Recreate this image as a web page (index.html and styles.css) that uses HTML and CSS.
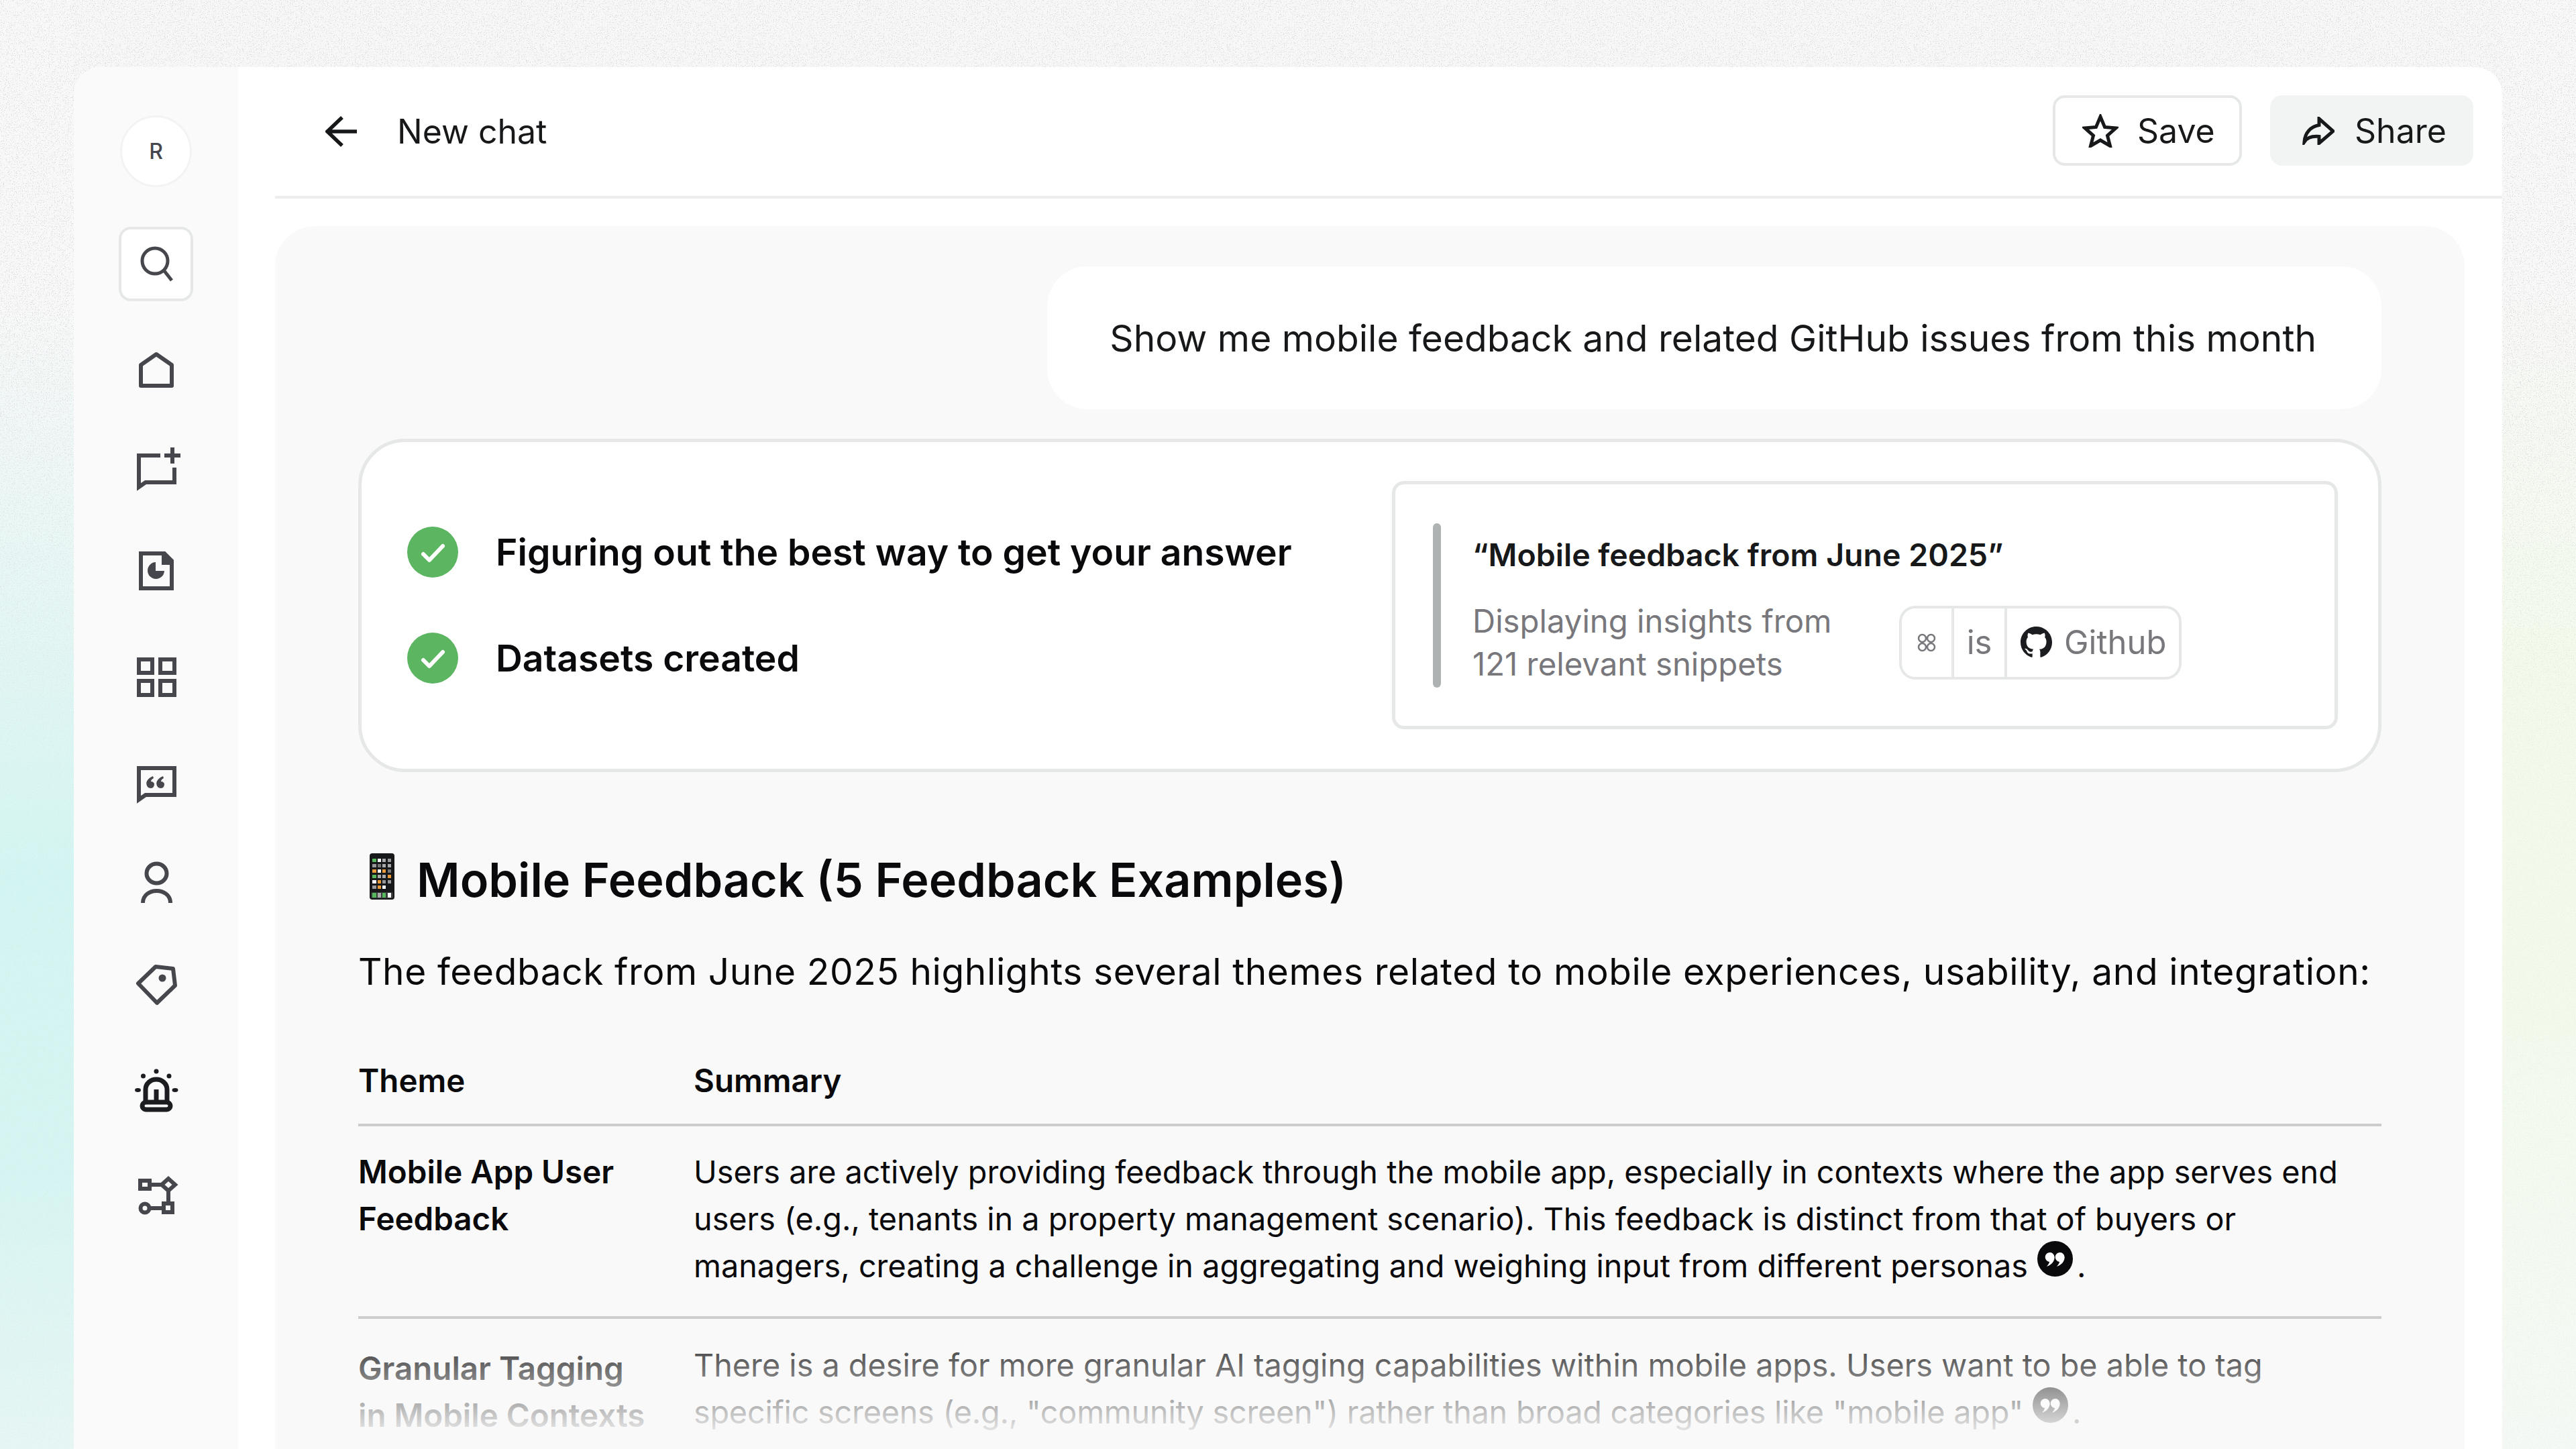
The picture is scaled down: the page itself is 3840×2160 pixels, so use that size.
FILE: index.html
```html
<!DOCTYPE html>
<html>
<head>
<title>New chat</title>
<link rel="stylesheet" href="styles.css">
</head>
<body>
    <svg class="grain" aria-hidden="true">
        <filter id="specks">
            <feTurbulence type="fractalNoise" baseFrequency="0.75" numOctaves="2" seed="7"/>
            <feColorMatrix type="matrix" values="0 0 0 0 0.72  0 0 0 0 0.72  0 0 0 0 0.72  0 0 0 -9 3.6"/>
        </filter>
        <rect width="100%" height="100%" filter="url(#specks)"/>
    </svg>

    <div class="window">
        <nav class="rail">
            <div class="avatar">R</div>
            <div class="search-btn">
                <svg viewBox="190 354 84 84"><circle cx="230" cy="391" r="19"/><path d="M244 406l11 14"/></svg>
            </div>
            <div class="rail-icons">
                <!-- each box is 84 square, viewBox is offset so the numbers read as page coordinates -->
                <svg viewBox="190 509 84 84"><path d="M209 575v-31l23-16 23 16v31z" stroke-linejoin="round"/></svg>
                <svg viewBox="190 663 84 84">
                    <path d="M238 679h-32v47l10-7h43v-22"/><path d="M256 667v24M244 679h24"/>
                </svg>
                <svg viewBox="190 817 84 84">
                    <path d="M244 825h-35v52h46v-41z"/><path class="solid" d="M240 825h5l13 12v5h-18z"/>
                    <path class="solid" d="M231 838v13h13a12.500 12.500 0 1 1-13-13z"/>
                </svg>
                <svg viewBox="190 971 84 84">
                    <path d="M206 983h20v20h-20zM238 983h21v20h-21zM206 1015h20v21h-20zM238 1015h21v21h-21z"/>
                </svg>
                <svg viewBox="190 1125 84 84">
                    <path d="M206 1145h53v40h-43l-10 7z"/>
                    <path class="solid" d="M219 1173c-4-6-1-12 8-16l1 3c-3 2-4 3-4 5 3 0 5 2 5 4 0 3-2 6-5 6-2 0-4-1-5-2zM234 1173c-4-6-1-12 8-16l1 3c-3 2-4 3-4 5 3 0 5 2 5 4 0 3-2 6-5 6-2 0-4-1-5-2z"/>
                </svg>
                <svg viewBox="190 1279 84 84">
                    <ellipse cx="232.500" cy="1302" rx="15" ry="14.500"/><path d="M212 1346c0-24 41-24 41 0"/>
                </svg>
                <svg viewBox="190 1433 84 84">
                    <path d="M205 1466l26-25 26 3 3 25-27 26z" stroke-linejoin="round"/><circle class="solid" cx="241" cy="1458" r="5.500"/>
                </svg>
                <svg class="dark" viewBox="190 1587 84 84">
                    <path d="M216 1641v-17a16 15 0 0 1 32 0v17"/><path d="M232 1624v16"/>
                    <rect x="211" y="1643" width="42" height="11" rx="5.500"/>
                    <g class="solid">
                        <circle cx="232" cy="1597" r="3.500"/><circle cx="212.500" cy="1604" r="3.500"/><circle cx="251" cy="1604" r="3.500"/>
                        <ellipse cx="204.500" cy="1625" rx="4.500" ry="3"/><ellipse cx="260" cy="1625" rx="4.500" ry="3"/>
                    </g>
                </svg>
                <svg viewBox="190 1741 84 84">
                    <path d="M208 1760h14v12h-14zM243 1794h13v13h-13z"/><path d="M240 1766l10-9 10 9-10 9z"/>
                    <circle cx="215" cy="1801" r="6.500"/><path d="M222 1766h18M250 1775v19M222 1801h21"/>
                </svg>
            </div>
        </nav>

        <div class="content">
            <header class="top">
                <svg class="back" viewBox="0 0 48 46"><path d="M47 23H3M25 2L3 23l22 21"/></svg>
                <span class="title">New chat</span>
                <div class="actions">
                    <a class="btn save">
                        <svg viewBox="0 0 54 50"><path d="M27 4l6.500 15.500 16.500 1.500-12.500 11 4 15.500-14.500-8.500-14.500 8.500 4-15.500-12.500-11 16.500-1.500z"/></svg>
                        Save
                    </a>
                    <a class="btn share">
                        <svg viewBox="0 0 48 42"><path d="M25 3l21 18.500-21 18v-10c-10-1-18 2-22 8 1-14 10-23 22-25z"/></svg>
                        Share
                    </a>
                </div>
            </header>

            <main class="panel">
                <div class="bubble">Show me mobile feedback and related GitHub issues from this month</div>

                <section class="status">
                    <div class="steps">
                        <div class="step"><svg viewBox="0 0 76 76"><circle cx="38" cy="38" r="38"/><path d="M24 41l9 9 20-21"/></svg>Figuring out the best way to get your answer</div>
                        <div class="step"><svg viewBox="0 0 76 76"><circle cx="38" cy="38" r="38"/><path d="M24 41l9 9 20-21"/></svg>Datasets created</div>
                    </div>
                    <div class="dataset">
                        <div class="dataset-bar"></div>
                        <div class="dataset-body">
                            <h3>“Mobile feedback from June 2025”</h3>
                            <div class="dataset-row">
                                <p>Displaying insights from<br>121 relevant snippets</p>
                                <div class="filter">
                                    <span class="cell cell-key">
                                        <svg viewBox="0 0 28 28"><circle cx="7.500" cy="7.500" r="5.500"/><circle cx="20.500" cy="7.500" r="5.500"/><circle cx="7.500" cy="20.500" r="5.500"/><circle cx="20.500" cy="20.500" r="5.500"/></svg>
                                    </span>
                                    <span class="cell cell-op">is</span>
                                    <span class="cell cell-val">
                                        <svg viewBox="0 0 16 16"><path d="M8 0C3.580 0 0 3.580 0 8c0 3.540 2.290 6.530 5.470 7.590.4.070.55-.17.55-.38 0-.19-.01-.82-.01-1.490-2.010.37-2.530-.49-2.690-.94-.09-.23-.48-.94-.82-1.130-.28-.15-.68-.52-.01-.53.63-.01 1.080.58 1.230.82.72 1.210 1.870.87 2.330.66.07-.52.28-.87.51-1.070-1.780-.2-3.640-.89-3.640-3.950 0-.87.31-1.590.82-2.150-.08-.2-.36-1.020.08-2.120 0 0 .67-.21 2.200.82.64-.18 1.320-.27 2-.27.68 0 1.360.09 2 .27 1.530-1.040 2.200-.82 2.200-.82.44 1.100.16 1.920.08 2.120.51.56.82 1.270.82 2.150 0 3.070-1.870 3.750-3.650 3.950.29.25.54.73.54 1.480 0 1.070-.01 1.930-.01 2.200 0 .21.15.46.55.38A8.013 8.013 0 0 0 16 8c0-4.420-3.580-8-8-8z"/></svg>
                                        Github
                                    </span>
                                </div>
                            </div>
                        </div>
                    </div>
                </section>

                <h1 class="answer-title">
                    <svg class="phone" viewBox="0 0 37 69">
                        <rect width="37" height="69" rx="4" fill="#17181a"/>
                        <rect x="4" y="8" width="6" height="5" fill="#55b85a"/><rect x="12" y="8" width="5" height="5" fill="#fff"/><rect x="19" y="8" width="5" height="5" fill="#aaa"/><rect x="27" y="8" width="5" height="5" fill="#999"/>
                        <rect x="4" y="16" width="6" height="5" fill="#999"/><rect x="12" y="16" width="5" height="5" fill="#777"/><rect x="19" y="16" width="5" height="5" fill="#aaa"/><rect x="27" y="16" width="5" height="5" fill="#aaa"/>
                        <rect x="4" y="24" width="6" height="5" fill="#ec9b3b"/><rect x="12" y="24" width="5" height="5" fill="#fff"/><rect x="19" y="24" width="5" height="5" fill="#ec9b3b"/><rect x="27" y="24" width="5" height="5" fill="#777"/>
                        <rect x="4" y="32" width="6" height="5" fill="#55b85a"/><rect x="12" y="32" width="5" height="5" fill="#aaa"/><rect x="19" y="32" width="5" height="5" fill="#aaa"/><rect x="27" y="32" width="5" height="5" fill="#ec9b3b"/>
                        <rect x="4" y="40" width="6" height="5" fill="#fff"/><rect x="12" y="40" width="5" height="5" fill="#ec9b3b"/><rect x="19" y="40" width="5" height="5" fill="#999"/><rect x="27" y="40" width="5" height="5" fill="#999"/>
                        <rect x="4" y="48" width="6" height="5" fill="#999"/><rect x="12" y="48" width="5" height="5" fill="#ec9b3b"/><rect x="19" y="48" width="5" height="5" fill="#fff"/>
                        <rect x="2" y="58" width="33" height="9" rx="2" fill="#3a3b3d"/>
                        <rect x="4" y="59" width="6" height="7" fill="#55b85a"/><rect x="12" y="59" width="5" height="7" fill="#aaa"/><rect x="19" y="59" width="5" height="7" fill="#55b85a"/><rect x="27" y="59" width="5" height="7" fill="#fff"/>
                    </svg>
                    Mobile Feedback (5 Feedback Examples)
                </h1>
                <p class="lead">The feedback from June 2025 highlights several themes related to mobile experiences, usability, and integration:</p>

                <table class="themes">
                    <thead>
                        <tr><th class="col-theme">Theme</th><th>Summary</th></tr>
                    </thead>
                    <tbody>
                        <tr>
                            <td class="col-theme">Mobile App User Feedback</td>
                            <td>Users are actively providing feedback through the mobile app, especially in contexts where the app serves end users (e.g., tenants in a property management scenario). This feedback is distinct from that of buyers or managers, creating a challenge in aggregating and weighing input from different personas<svg class="cite" viewBox="0 0 53 53"><circle cx="26.500" cy="26.500" r="26.500"/><path d="M14 38c6-2 11.700-7 11.700-14a7 7 0 1 0-7.700 7c0 2-2 4-4 7zM29 38c6-2 11.700-7 11.700-14a7 7 0 1 0-7.700 7c0 2-2 4-4 7z"/></svg>.</td>
                        </tr>
                        <tr>
                            <td class="col-theme">Granular Tagging in Mobile Contexts</td>
                            <td>There is a desire for more granular AI tagging capabilities within mobile apps. Users want to be able to tag <span class="tight">specific screens (e.g., "community screen") rather than broad categories like "mobile app"</span><svg class="cite" viewBox="0 0 53 53"><circle cx="26.500" cy="26.500" r="26.500"/><path d="M14 38c6-2 11.700-7 11.700-14a7 7 0 1 0-7.700 7c0 2-2 4-4 7zM29 38c6-2 11.700-7 11.700-14a7 7 0 1 0-7.700 7c0 2-2 4-4 7z"/></svg>.</td>
                        </tr>
                    </tbody>
                </table>

                <div class="fade"></div>
            </main>
        </div>
    </div>
</body>
</html>
```

FILE: styles.css
```css
html, body { margin:0; padding:0; }
body { width:3840px; height:2160px; overflow:hidden; position:relative; font-family:Inter,"Liberation Sans",sans-serif; color:#0a0a0c;
    background:
        linear-gradient(180deg, #f8f8f8 0, #f8f8f8 450px, #d3f5f1 1300px, #d6f5f2 1750px, #e6f6f4 2160px) left top / 110px 100% no-repeat,
        linear-gradient(180deg, #f8f8f8 0, #f8f8f8 400px, #f3faeb 1000px, #f3faec 1500px, #f5f9f5 2160px) right top / 110px 100% no-repeat,
        #f7f7f7; }
h1,h3,p { margin:0; font-size:100%; font-weight:normal; }
svg { display:block; }

.grain { position:absolute; left:0; top:0; width:3840px; height:2160px; -webkit-mask-image:linear-gradient(180deg, #000 0, #000 500px, rgba(0,0,0,.25) 1200px); mask-image:linear-gradient(180deg, #000 0, #000 500px, rgba(0,0,0,.25) 1200px); }

.window { position:absolute; left:110px; top:100px; width:3620px; height:2060px; display:flex; background:#fff; border-radius:40px 40px 0 0; overflow:hidden; }

/* left rail */
.rail { width:245px; flex:none; background:#fafafa; display:flex; flex-direction:column; align-items:center; padding-top:72px; box-sizing:border-box; }
.rail svg { fill:none; stroke:#46474c; stroke-width:6; }
.rail .solid { fill:#46474c; stroke:none; }
.rail .dark { stroke:#1c1d20; stroke-width:7; }
.rail .dark .solid { fill:#1c1d20; }
.avatar { width:107px; height:107px; box-sizing:border-box; border:3px solid #f3f3f3; border-radius:50%; background:#fff; display:flex; align-items:center; justify-content:center; font-size:32px; font-weight:500; color:#46474c; }
.search-btn { width:111px; height:111px; margin-top:59px; box-sizing:border-box; border:4px solid #e6e8e8; border-radius:18px; background:#fff; display:flex; align-items:center; justify-content:center; flex:none; }
.search-btn svg { width:84px; height:84px; stroke-width:5; }
.rail-icons { margin-top:60px; display:flex; flex-direction:column; gap:70px; }
.rail-icons svg { width:84px; height:84px; }

/* top bar */
.content { flex:1; min-width:0; display:flex; flex-direction:column; }
.top { height:189px; flex:none; margin-left:55px; padding:0 43px 3px 75px; display:flex; align-items:center; border-bottom:4px solid #eceded; }
.back { width:48px; height:46px; margin-top:3px; fill:none; stroke:#17181a; stroke-width:5.5; }
.title { margin:3px 0 0 59px; font-size:50px; color:#17181a; }
.actions { margin-left:auto; display:flex; gap:42px; }
.btn { height:105px; box-sizing:border-box; border-radius:18px; display:flex; align-items:center; font-size:50px; color:#17181a; }
.save { width:282px; padding-left:40px; border:4px solid #e6e8e8; gap:28px; }
.save svg { width:54px; height:50px; fill:none; stroke:#17181a; stroke-width:5; }
.share { width:303px; padding-left:48px; background:#f2f4f3; gap:30px; }
.share svg { width:48px; height:42px; fill:none; stroke:#17181a; stroke-width:5; }

/* chat panel */
.panel { position:relative; flex:1; margin:41px 56px 0 55px; padding:60px 124px 0; background:#f9f9f9; border-radius:60px 60px 0 0; display:flex; flex-direction:column; overflow:hidden; }
.panel > * { flex:none; }
.bubble { align-self:flex-end; height:213px; box-sizing:border-box; padding:0 97px 0 93px; display:flex; align-items:center; background:#fff; border-radius:60px; font-size:55.100px; color:#17181a; }

.status { margin-top:44px; height:497px; box-sizing:border-box; padding:58px 60px 59px 68px; border:5px solid #e6e8e8; border-radius:70px; background:#fff; display:flex; justify-content:space-between; align-items:center; }
.steps { display:flex; flex-direction:column; gap:82px; }
.step { display:flex; align-items:center; gap:56px; font-size:55.200px; font-weight:600; }
.step svg { width:76px; height:76px; }
.step circle { fill:#5cb561; }
.step path { fill:none; stroke:#fff; stroke-width:6; stroke-linecap:round; stroke-linejoin:round; }

.dataset { width:1410px; height:370px; box-sizing:border-box; border:5px solid #e6e8e8; border-radius:18px; padding-left:56px; display:flex; align-items:center; gap:47px; }
.dataset-bar { width:12px; height:245px; border-radius:6px; background:#aeb2b2; }
.dataset-body { padding-top:12px; }
.dataset-body h3 { font-size:46.500px; line-height:64px; font-weight:600; color:#17181a; }
.dataset-row { margin-top:35px; display:flex; align-items:center; }
.dataset-row p { width:636px; font-size:47.300px; line-height:64px; color:#77777c; }
.filter { height:110px; box-sizing:border-box; border:4px solid #e6e8e8; border-radius:24px; display:flex; align-items:stretch; font-size:49px; color:#77777c; }
.cell { display:flex; align-items:center; box-sizing:border-box; }
.cell-key { width:74px; justify-content:center; }
.cell-key svg { width:28px; height:28px; fill:none; stroke:#77777c; stroke-width:2.500; }
.cell-op { width:83px; justify-content:center; border-left:4px solid #e6e8e8; border-right:4px solid #e6e8e8; }
.cell-val { padding-left:20px; width:256px; gap:18px; }
.cell-val svg { width:47px; height:47px; fill:#1b1c1f; }

/* answer */
.answer-title { margin-top:111px; height:100px; display:flex; align-items:center; font-size:70.100px; line-height:100px; font-weight:600; }
.phone { width:37px; height:69px; margin:0 33px 12px 17px; }
.lead { margin-top:46px; font-size:55px; line-height:80px; letter-spacing:0.6px; }

.themes { margin-top:88px; border-collapse:collapse; width:100%; font-size:46.750px; line-height:70px; }
.themes th { text-align:left; font-weight:600; font-size:47.500px; padding:0 0 29px; border-bottom:4px solid #ccc; }
.themes td { padding:34px 0 37px; border-bottom:4px solid #ccc; vertical-align:top; }
.themes tbody tr:first-child td { padding:33px 0 40px; }
.themes tbody tr:last-child .col-theme { padding-top:39px; }
.themes .col-theme { width:432px; padding-right:68px; font-weight:600; font-size:47.500px; }
.tight { letter-spacing:-0.22px; }
.cite { display:inline-block; width:53px; height:53px; margin:-6px 6px 0 14px; vertical-align:1px; }
.cite circle { fill:#0a0a0c; }
.cite path { fill:#fff; }

.fade { position:absolute; left:0; right:0; top:1623px; height:200px; background:linear-gradient(180deg, rgba(249,249,249,0) 0, #f9f9f9 190px); }
```
